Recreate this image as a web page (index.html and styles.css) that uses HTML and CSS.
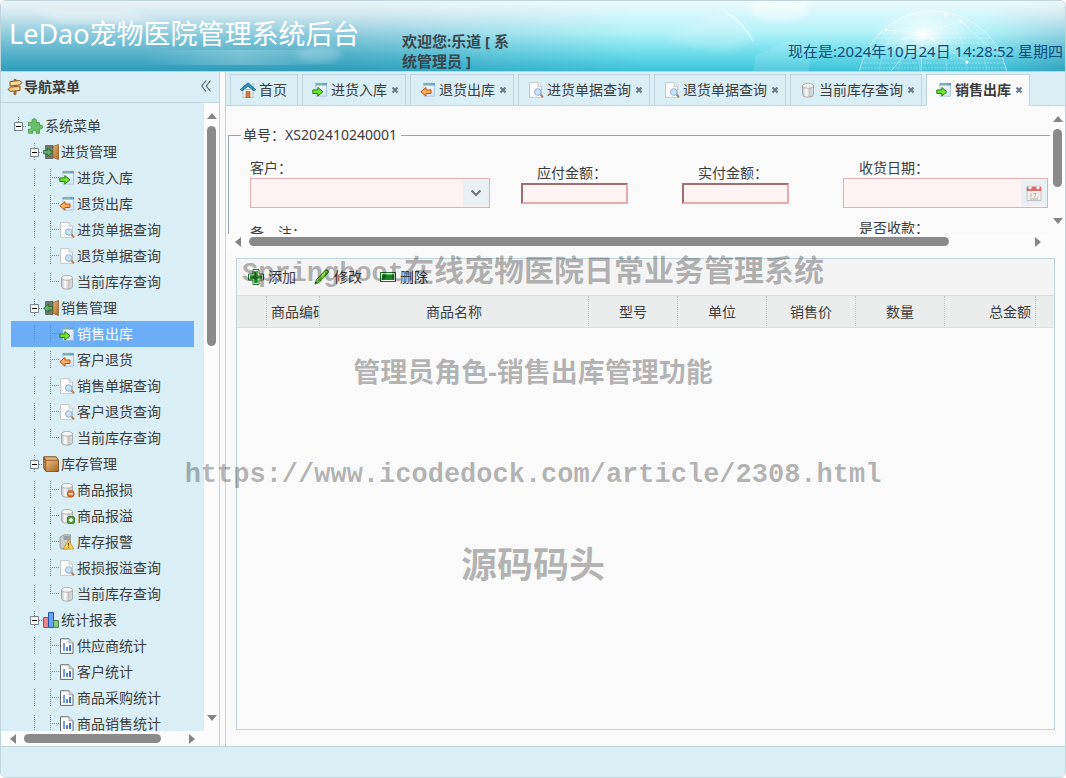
FILE: index.html
```html
<!DOCTYPE html>
<html lang="zh-CN">
<head>
<meta charset="utf-8">
<title>LeDao宠物医院管理系统后台</title>
<link rel="stylesheet" href="styles.css">
</head>
<body>
<svg class="sprite" aria-hidden="true">
  <defs>
    <linearGradient id="cyl" x1="0" x2="1" y1="0" y2="0"><stop offset="0" stop-color="#bdbdbd"/><stop offset=".35" stop-color="#fff"/><stop offset=".65" stop-color="#c4c4c4"/><stop offset="1" stop-color="#e2e2e2"/></linearGradient>
    <linearGradient id="win" x1="0" x2="1" y1="0" y2="1"><stop offset="0" stop-color="#fff"/><stop offset="1" stop-color="#cfe3f8"/></linearGradient>
    <linearGradient id="bar" x1="0" x2="1" y1="0" y2="0"><stop offset="0" stop-color="#7ea6dc"/><stop offset="1" stop-color="#3566ad"/></linearGradient>
    <linearGradient id="wood" x1="0" x2="1" y1="0" y2="1"><stop offset="0" stop-color="#e8b878"/><stop offset="1" stop-color="#a8692c"/></linearGradient>
  </defs>
  <symbol id="i-sign" viewBox="0 0 16 16"><path d="M7 .5h2v15H7z" fill="#c98b45" stroke="#70451e" stroke-width=".7"/><path d="M3 2.500 12.500 1.500l2.500 2-2.500 2.500-9.500 1z" fill="#f3cf8e" stroke="#8a5a25"/><path d="M13 7 3.500 8 1 10.500l2.500 2 9.500-1z" fill="#eebb70" stroke="#8a5a25"/><path d="m4 4.700 8-1M4 10.500l8-1" stroke="#fbe6bd"/></symbol>
  <symbol id="i-home" viewBox="0 0 16 16"><path d="M3 7.500h10V15.500H3z" fill="#f4f1ec" stroke="#b7aca2" stroke-width=".8"/><path d="M6 9.500h4v6H6z" fill="#c87d49" stroke="#93562c" stroke-width=".6"/><path d="M8 .8.5 7.300 2 9l6-5 6 5 1.500-1.700z" fill="#2b8fb8" stroke="#17698e" stroke-width=".8"/><path d="M12 1.500h2v3l-2-1.500z" fill="#e8ecee" stroke="#aaa" stroke-width=".4"/></symbol>
  <symbol id="i-win" viewBox="0 0 16 16"><path d="M4 1.300h10.500v12.900H4z" fill="url(#win)" stroke="#a9c3e0" stroke-width=".9"/><path d="M3.600 1h11.400v2.500H3.600z" fill="#6ba0cd"/><path d="M4 1.300h7v1.400H4z" fill="#86bd9a"/></symbol>
  <symbol id="i-in" viewBox="0 0 16 16"><use href="#i-win"/><path d="M.8 8h5V5.500l5.200 4.300-5.200 4.300V11.500h-5z" fill="#6fe52c" stroke="#267d16"/></symbol>
  <symbol id="i-out" viewBox="0 0 16 16"><use href="#i-win"/><path d="M11 8H6V5.500L.8 9.800 6 14.100V11.500h5z" fill="#ffac5e" stroke="#b65410"/></symbol>
  <symbol id="i-find" viewBox="0 0 16 16"><path d="M1.500.6H10l3.500 3.500v11.300h-12z" fill="#fcfcfd" stroke="#bfc3c8" stroke-width=".9"/><path d="M10 .8v3.500h3.500" fill="#e4e8ec" stroke="#bfc3c8" stroke-width=".7"/><path d="m12.300 12.300 2.700 3" stroke="#ba7b4c" stroke-width="2"/><circle cx="9.800" cy="10" r="3.300" fill="#c9e0f8" stroke="#8fb2d9"/></symbol>
  <symbol id="i-db" viewBox="0 0 16 16"><path d="M2.500 4v8.500c0 3.500 11 3.500 11 0V4z" fill="url(#cyl)" stroke="#9a9a9a" stroke-width=".8"/><ellipse cx="8" cy="3.800" rx="5.500" ry="2.400" fill="#f5f5f5" stroke="#a5a5a5" stroke-width=".8"/></symbol>
  <symbol id="i-dbdel" viewBox="0 0 16 16"><use href="#i-db"/><circle cx="11.800" cy="11.800" r="3.400" fill="#e5742d" stroke="#b14a12" stroke-width=".8"/><path d="M9.800 11.800h4" stroke="#fff" stroke-width="1.500"/></symbol>
  <symbol id="i-dbadd" viewBox="0 0 16 16"><use href="#i-db"/><rect x="8.500" y="8.500" width="7" height="7" rx="1.500" fill="#5da046" stroke="#2e6d25" stroke-width=".8"/><path d="M10 12h4M12 10v4" stroke="#fff" stroke-width="1.400"/></symbol>
  <symbol id="i-warn" viewBox="0 0 16 16"><path d="M1 3 5 .8h6.500v11L8 15H2L1 13z" fill="#c9cbcd" stroke="#8e9296" stroke-width=".8"/><path d="M4.500 3H11M4.500 5H11" stroke="#73777a"/><path d="M9.500 6 14.800 15H4.200z" fill="#ffd964" stroke="#c99422" stroke-linejoin="round"/><path d="M9.500 8.800v3M9.500 12.800v1.100" stroke="#6c4d08" stroke-width="1.200"/></symbol>
  <symbol id="i-puzzle" viewBox="0 0 16 16"><path d="M1.500 4.500h4C4 2 5.500.8 7.200.8S10.300 2 9 4.500h3.500v3c2-1.200 3 .2 3 1.500s-1 2.700-3 1.500v4.700H9c1-2-.2-2.800-1.500-2.800s-2.500.8-1.500 2.800H1.500V11c2 1 3-.5 3-1.700S3.500 7 1.500 8z" fill="#6abf6a" stroke="#4c9c4f" stroke-width=".9"/></symbol>
  <symbol id="i-doorin" viewBox="0 0 16 16"><path d="M2.500 1.500H10v13H2.500z" fill="#6d7874" stroke="#4c5552" stroke-width=".7"/><path d="m10 2.500 5.500-2v15l-5.500-2z" fill="url(#wood)" stroke="#94612a" stroke-width=".8"/><path d="M.5 6.500h4V4l5 4.200-5 4.200V9.900h-4z" fill="#61ad62" stroke="#28652c" stroke-width=".8"/></symbol>
  <symbol id="i-doorout" viewBox="0 0 16 16"><path d="M2.500 1.500H10v13H2.500z" fill="#6d7874" stroke="#4c5552" stroke-width=".7"/><path d="m10 2.500 5.500-2v15l-5.500-2z" fill="url(#wood)" stroke="#94612a" stroke-width=".8"/><path d="M9.500 6.500h-4V4l-5 4.200 5 4.200V9.900h4z" fill="#61ad62" stroke="#28652c" stroke-width=".8"/></symbol>
  <symbol id="i-box" viewBox="0 0 16 16"><path d="M.7.800h12.500l2.300 3.500V15.500H3L.7 12z" fill="#8c5424" stroke="#67401c" stroke-width=".8"/><path d="M3.200 4.700h12v10.500h-12z" fill="url(#wood)"/><path d="M1 1h11.800l2.500 3.200H3.300z" fill="#e1b579" stroke="#9b6730" stroke-width=".7"/><path d="M1.800 4v8.500" stroke="#c8904e"/></symbol>
  <symbol id="i-chart" viewBox="0 0 16 16"><path d="M.6 5.500h4.800v9.900H.6z" fill="#f58a8a" stroke="#c93740"/><path d="M5.500.600h5v14.800h-5z" fill="#6ba3f5" stroke="#2255a8"/><path d="M10.600 8.500h4.800v6.900h-4.800z" fill="#8fce82" stroke="#43813e"/></symbol>
  <symbol id="i-report" viewBox="0 0 16 16"><path d="M1.500.8H10l4 4v10.600H1.500z" fill="#fff" stroke="#61686e"/><path d="M10 .8v4h4" fill="#d7dce0" stroke="#8e959a" stroke-width=".8"/><path d="M4 5h2v8H4zM7 9h2v4H7zM10 7h2v6h-2z" fill="url(#bar)"/></symbol>
  <symbol id="i-minus" viewBox="0 0 9 9"><path d="M.5.5h8v8h-8z" fill="#fff" stroke="#7b8488"/><path d="M2 4.500h5" stroke="#000"/></symbol>
  <symbol id="i-x" viewBox="0 0 8 8"><path d="m1.500 1.500 5 5m0-5-5 5" stroke="#67768a" stroke-width="2"/></symbol>
  <symbol id="i-add" viewBox="0 0 16 16"><path d="M5 .5h6V5h4.500v6H11v4.500H5V11H.5V5H5z" fill="#fff" stroke="#20702b"/><path d="M6.200 2h3.600v4.200H14v3.600H9.800V14H6.200V9.800H2V6.200h4.200z" fill="#16891d"/><path d="M7 2.500h1.500V7H13" fill="none" stroke="#67be62" stroke-width=".7"/></symbol>
  <symbol id="i-edit" viewBox="0 0 16 16"><path d="m1 15 1.500-4.500 9-9.500c1.500-.8 3.500.8 2.800 2.500l-9 9.800z" fill="#6dcc2c" stroke="#267d18"/><path d="m3.500 11 9-9" stroke="#c7f492"/><path d="m1 15 .8-2.400 1.600 1.400z" fill="#2c4121"/></symbol>
  <symbol id="i-del" viewBox="0 0 16 16"><rect x=".5" y="3.500" width="15" height="9" fill="#fff" stroke="#20702b"/><path d="M2 5h12v6H2z" fill="#16891d"/><path d="M2.500 5.500h11" stroke="#67be62"/></symbol>
  <symbol id="i-cal" viewBox="0 0 16 16"><path d="M1 3h14v12.500H1z" fill="#f2f0ef" stroke="#bab4b1" stroke-width=".8"/><path d="M.8 1.500h14.400V6H.8z" fill="#df6a68"/><circle cx="4" cy="2.500" r="1.700" fill="#fff" stroke="#bbb" stroke-width=".6"/><circle cx="12" cy="2.500" r="1.700" fill="#fff" stroke="#bbb" stroke-width=".6"/><path d="M5 8v4.500M7.500 8.300h2.500l-1.500 4.200M11 12h1.500M4 14h8" stroke="#b2aca9" fill="none" stroke-width=".9"/></symbol>
  <symbol id="a-up" viewBox="0 0 10 6"><path d="m0 6 5-6 5 6z" fill="#858585"/></symbol>
  <symbol id="a-down" viewBox="0 0 10 6"><path d="m0 0 5 6 5-6z" fill="#858585"/></symbol>
  <symbol id="a-left" viewBox="0 0 6 10"><path d="m6 0-6 5 6 5z" fill="#858585"/></symbol>
  <symbol id="a-right" viewBox="0 0 6 10"><path d="m0 0 6 5-6 5z" fill="#858585"/></symbol>
</svg>

<div class="app">
  <header class="banner">
    <svg class="banner-art" viewBox="0 0 1064 70" preserveAspectRatio="none" aria-hidden="true">
      <defs>
        <linearGradient id="sky" x1="0" x2="0" y1="0" y2="1"><stop offset="0" stop-color="#edf5f8"/><stop offset=".2" stop-color="#cfe6ee"/><stop offset=".5" stop-color="#87c8da"/><stop offset=".78" stop-color="#50afc8"/><stop offset="1" stop-color="#2f9cba"/></linearGradient>
        <linearGradient id="aqua" x1="0" x2="0" y1="0" y2="1"><stop offset="0" stop-color="#eefafc"/><stop offset=".45" stop-color="#b2f2f9"/><stop offset=".75" stop-color="#6cdcea"/><stop offset="1" stop-color="#3cc2da"/></linearGradient>
        <linearGradient id="fade" x1="0" x2="1" y1="0" y2="0"><stop offset=".32" stop-color="#000"/><stop offset=".6" stop-color="#fff"/><stop offset=".92" stop-color="#fff"/><stop offset="1" stop-color="#333"/></linearGradient>
        <mask id="m"><path d="M0 0h1064v70H0z" fill="url(#fade)"/></mask>
        <radialGradient id="glow"><stop offset="0" stop-color="#fff"/><stop offset=".35" stop-color="#fff" stop-opacity=".5"/><stop offset="1" stop-color="#fff" stop-opacity="0"/></radialGradient>
        <linearGradient id="mist" x1="0" x2="1" y1="0" y2="0"><stop offset="0" stop-color="#fff" stop-opacity="0"/><stop offset=".5" stop-color="#fff" stop-opacity=".22"/><stop offset="1" stop-color="#fff" stop-opacity="0"/></linearGradient>
        <filter id="soft"><feGaussianBlur stdDeviation="3"/></filter>
      </defs>
      <path d="M0 0h1064v70H0z" fill="url(#sky)"/>
      <path d="M0 0h1064v70H0z" fill="url(#aqua)" mask="url(#m)"/>
      <path d="M30 8h95l35 14H60z" fill="#fff" opacity=".3" filter="url(#soft)"/>
      <path d="M140 49h200v15H140z" fill="url(#mist)"/>
      <ellipse cx="318" cy="53" rx="22" ry="8" fill="#fff" opacity=".2" filter="url(#soft)"/>
      <path d="m665 36 55-26q22 5 31 30l-22 10q-42-1-64-14z" fill="#fff" opacity=".15" filter="url(#soft)"/>
      <path d="M724 11q16 8 28 29" fill="none" stroke="#fff" stroke-width="2" opacity=".4"/>
      <path d="m755 55 32-15 24 8-4 22h-54z" fill="#fff" opacity=".13" stroke="#fff"/>
      <ellipse cx="778" cy="7" rx="30" ry="13" fill="#fff" opacity=".45" filter="url(#soft)"/>
      <g fill="none" stroke="#fff">
        <circle cx="932" cy="85" r="75" fill="#fff" fill-opacity=".1" opacity=".5"/>
        <g opacity=".3" stroke-dasharray="2 1"><ellipse cx="932" cy="85" rx="55" ry="75"/><ellipse cx="932" cy="85" rx="35" ry="75"/><ellipse cx="932" cy="85" rx="14" ry="75"/><path d="M892 22h80M879 32h106M870 42h124M864 52h136M860 62h144M874 37h116M866 47h132M862 57h140M858 67h148"/></g>
        <path d="m865 50 57-18 38-12 30 28M885 29l37 3 44 29M922 32l-32 38M922 32l-2 38" opacity=".4"/>
      </g>
      <ellipse cx="923" cy="33" rx="50" ry="28" fill="url(#glow)"/>
      <g fill="#fff"><circle cx="885" cy="29" r="1.500"/><circle cx="960" cy="20" r="1.500"/><circle cx="966" cy="61" r="1.500"/><circle cx="990" cy="48" r="1.500"/><circle cx="945" cy="14" r="1.500"/><circle cx="900" cy="46" r="1.500"/></g>
    </svg>
    <h1 class="brand">LeDao宠物医院管理系统后台</h1>
    <p class="welcome">欢迎您:乐道 [ 系统管理员 ]</p>
    <time class="clock" datetime="2024-10-24T14:28:52">现在是:2024年10月24日 14:28:52 星期四</time>
  </header>

  <div class="middle">
    <aside class="side">
      <div class="side-head">
        <svg class="icon"><use href="#i-sign"/></svg>
        <h2>导航菜单</h2>
        <button class="collapse" type="button" aria-label="收起"><svg width="10" height="12" viewBox="0 0 10 12"><path d="M5 .5.800 6 5 11.500M9.500.5 5.300 6l4.200 5.500" fill="none" stroke="#5c6670" stroke-width="1.200"/></svg></button>
      </div>
      <div class="side-body">
        <nav class="tree" aria-label="导航菜单">
          <a class="node top" href="#"><i class="hit"><svg><use href="#i-minus"/></svg></i><svg class="icon"><use href="#i-puzzle"/></svg><span>系统菜单</span></a>
          <a class="node" href="#"><i></i><i class="hit"><svg><use href="#i-minus"/></svg></i><svg class="icon"><use href="#i-doorin"/></svg><span>进货管理</span></a>
          <a class="node" href="#"><i></i><i class="line"></i><i class="join"></i><svg class="icon"><use href="#i-in"/></svg><span>进货入库</span></a>
          <a class="node" href="#"><i></i><i class="line"></i><i class="join"></i><svg class="icon"><use href="#i-out"/></svg><span>退货出库</span></a>
          <a class="node" href="#"><i></i><i class="line"></i><i class="join"></i><svg class="icon"><use href="#i-find"/></svg><span>进货单据查询</span></a>
          <a class="node" href="#"><i></i><i class="line"></i><i class="join"></i><svg class="icon"><use href="#i-find"/></svg><span>退货单据查询</span></a>
          <a class="node" href="#"><i></i><i class="line"></i><i class="join last"></i><svg class="icon"><use href="#i-db"/></svg><span>当前库存查询</span></a>
          <a class="node" href="#"><i></i><i class="hit"><svg><use href="#i-minus"/></svg></i><svg class="icon"><use href="#i-doorout"/></svg><span>销售管理</span></a>
          <a class="node selected" href="#"><i></i><i class="line"></i><i class="join"></i><svg class="icon"><use href="#i-in"/></svg><span>销售出库</span></a>
          <a class="node" href="#"><i></i><i class="line"></i><i class="join"></i><svg class="icon"><use href="#i-out"/></svg><span>客户退货</span></a>
          <a class="node" href="#"><i></i><i class="line"></i><i class="join"></i><svg class="icon"><use href="#i-find"/></svg><span>销售单据查询</span></a>
          <a class="node" href="#"><i></i><i class="line"></i><i class="join"></i><svg class="icon"><use href="#i-find"/></svg><span>客户退货查询</span></a>
          <a class="node" href="#"><i></i><i class="line"></i><i class="join last"></i><svg class="icon"><use href="#i-db"/></svg><span>当前库存查询</span></a>
          <a class="node" href="#"><i></i><i class="hit"><svg><use href="#i-minus"/></svg></i><svg class="icon"><use href="#i-box"/></svg><span>库存管理</span></a>
          <a class="node" href="#"><i></i><i class="line"></i><i class="join"></i><svg class="icon"><use href="#i-dbdel"/></svg><span>商品报损</span></a>
          <a class="node" href="#"><i></i><i class="line"></i><i class="join"></i><svg class="icon"><use href="#i-dbadd"/></svg><span>商品报溢</span></a>
          <a class="node" href="#"><i></i><i class="line"></i><i class="join"></i><svg class="icon"><use href="#i-warn"/></svg><span>库存报警</span></a>
          <a class="node" href="#"><i></i><i class="line"></i><i class="join"></i><svg class="icon"><use href="#i-find"/></svg><span>报损报溢查询</span></a>
          <a class="node" href="#"><i></i><i class="line"></i><i class="join last"></i><svg class="icon"><use href="#i-db"/></svg><span>当前库存查询</span></a>
          <a class="node" href="#"><i></i><i class="hit"><svg><use href="#i-minus"/></svg></i><svg class="icon"><use href="#i-chart"/></svg><span>统计报表</span></a>
          <a class="node" href="#"><i></i><i class="line"></i><i class="join"></i><svg class="icon"><use href="#i-report"/></svg><span>供应商统计</span></a>
          <a class="node" href="#"><i></i><i class="line"></i><i class="join"></i><svg class="icon"><use href="#i-report"/></svg><span>客户统计</span></a>
          <a class="node" href="#"><i></i><i class="line"></i><i class="join"></i><svg class="icon"><use href="#i-report"/></svg><span>商品采购统计</span></a>
          <a class="node" href="#"><i></i><i class="line"></i><i class="join"></i><svg class="icon"><use href="#i-report"/></svg><span>商品销售统计</span></a>
        </nav>
        <div class="vbar" aria-hidden="true"><svg><use href="#a-up"/></svg><div class="track"><div class="thumb thumb-tree-v"></div></div><svg><use href="#a-down"/></svg></div>
        <div class="hbar" aria-hidden="true"><svg><use href="#a-left"/></svg><div class="track"><div class="thumb thumb-tree-h"></div></div><svg><use href="#a-right"/></svg></div>
      </div>
    </aside>

    <main class="center">
      <div class="tabs">
        <button class="tab home" type="button"><svg class="icon"><use href="#i-home"/></svg><span>首页</span></button>
        <button class="tab" type="button"><svg class="icon"><use href="#i-in"/></svg><span>进货入库</span><svg class="close"><use href="#i-x"/></svg></button>
        <button class="tab" type="button"><svg class="icon"><use href="#i-out"/></svg><span>退货出库</span><svg class="close"><use href="#i-x"/></svg></button>
        <button class="tab" type="button"><svg class="icon"><use href="#i-find"/></svg><span>进货单据查询</span><svg class="close"><use href="#i-x"/></svg></button>
        <button class="tab" type="button"><svg class="icon"><use href="#i-find"/></svg><span>退货单据查询</span><svg class="close"><use href="#i-x"/></svg></button>
        <button class="tab" type="button"><svg class="icon"><use href="#i-db"/></svg><span>当前库存查询</span><svg class="close"><use href="#i-x"/></svg></button>
        <button class="tab active" type="button"><svg class="icon"><use href="#i-in"/></svg><span>销售出库</span><svg class="close"><use href="#i-x"/></svg></button>
      </div>

      <section class="form-pane">
        <form class="form-view">
          <fieldset class="order">
            <legend>单号：XS202410240001</legend>
            <div class="fields">
              <div class="field">
                <label for="customer">客户：</label>
                <div class="combo"><input id="customer" type="text"><button type="button" aria-label="展开"><svg width="12" height="8" viewBox="0 0 12 8"><path d="m1.500 1.500 4.500 4.500 4.500-4.500" fill="none" stroke="#737373" stroke-width="2"/></svg></button></div>
              </div>
              <div class="field inset"><label for="due">应付金额：</label><input class="amount" id="due" type="text"></div>
              <div class="field inset"><label for="paid">实付金额：</label><input class="amount" id="paid" type="text"></div>
              <div class="field inset">
                <label for="date">收货日期：</label>
                <div class="combo"><input id="date" type="text"><button type="button" aria-label="选择日期"><svg class="icon"><use href="#i-cal"/></svg></button></div>
              </div>
              <div class="field remark"><label for="note">备　注：</label><input class="amount" id="note" type="text"></div>
              <div class="field inset received"><label for="state">是否收款：</label><div class="combo"><input id="state" type="text"></div></div>
            </div>
          </fieldset>
        </form>
        <div class="vbar" aria-hidden="true"><svg><use href="#a-up"/></svg><div class="track"><div class="thumb thumb-form-v"></div></div><svg><use href="#a-down"/></svg></div>
        <div class="hbar" aria-hidden="true"><svg><use href="#a-left"/></svg><div class="track"><div class="thumb thumb-form-h"></div></div><svg><use href="#a-right"/></svg></div>
      </section>

      <section class="grid">
        <div class="toolbar">
          <button type="button"><svg class="icon"><use href="#i-add"/></svg>添加</button>
          <button type="button"><svg class="icon"><use href="#i-edit"/></svg>修改</button>
          <button type="button"><svg class="icon"><use href="#i-del"/></svg>删除</button>
        </div>
        <table>
          <colgroup><col class="c-no"><col class="c-code"><col class="c-name"><col class="c-std"><col class="c-std"><col class="c-std"><col class="c-std"><col class="c-sum"><col></colgroup>
          <thead><tr><th></th><th class="code">商品编码</th><th>商品名称</th><th>型号</th><th>单位</th><th>销售价</th><th>数量</th><th class="sum">总金额</th><th></th></tr></thead>
        </table>
      </section>
    </main>
  </div>

  <footer class="foot"></footer>

  <div class="watermark">
    <p><span class="latin">Springboot</span>在线宠物医院日常业务管理系统</p>
    <p class="mid">管理员角色-销售出库管理功能</p>
    <p class="latin">https://www.icodedock.com/article/2308.html</p>
    <p class="big">源码码头</p>
  </div>
</div>
</body>
</html>
```
FILE: styles.css
```css
* { box-sizing: border-box; }

body {
  margin: 0;
  background: #fff;
  color: #3c3c3c;
  font: 14px/20px "Noto Sans", "Noto Sans CJK SC", sans-serif;
}

h1, h2, p { margin: 0; }
button, input { font: inherit; color: inherit; border-radius: 0; }
button { margin: 0; padding: 0; border: 0; background: none; cursor: pointer; }

.sprite { position: absolute; width: 0; height: 0; }
.icon { flex: none; display: block; width: 16px; height: 16px; }

.app {
  position: relative;
  display: flex;
  flex-direction: column;
  height: 100vh;
  overflow: hidden;
  border: 1px solid #c0d5db;
  border-radius: 6px;
  background: #fafafa;
}

/* Banner */
.banner {
  position: relative;
  flex: none;
  display: grid;
  grid-template-columns: 393px 120px 1fr;
  height: 70px;
  padding: 0 2px 0 8px;
}
.banner-art { position: absolute; inset: 0; width: 100%; height: 100%; }
.brand {
  position: relative;
  padding-top: 13px;
  color: #fff;
  font-size: 27px;
  font-weight: 400;
  line-height: 40px;
  white-space: nowrap;
}
.welcome {
  position: relative;
  padding-top: 30px;
  color: #3b464c;
  font-size: 15px;
  font-weight: 700;
}
.clock {
  position: relative;
  padding-top: 40px;
  color: #0e4c7c;
  font-size: 15px;
  text-align: right;
  white-space: nowrap;
}

.middle {
  flex: 1;
  display: flex;
  gap: 5px;
  min-height: 0;
  background: #fafafa;
  border-top: 1px solid #c0d5db;
}

/* Navigation */
.side {
  flex: none;
  display: flex;
  flex-direction: column;
  width: 219px;
  border-right: 1px solid #c0d5db;
}
.side-head {
  display: flex;
  align-items: center;
  gap: 1px;
  height: 31px;
  padding: 0 8px 0 6px;
  background: #daeef5;
  border-bottom: 1px solid #c0d5db;
}
.side-head h2 { flex: 1; font-size: 14px; font-weight: 700; }
.side-body {
  flex: 1;
  display: grid;
  grid-template: minmax(0, 1fr) 15px / 1fr 15px;
  min-height: 0;
}
.tree {
  overflow: hidden;
  padding: 10px;
  background: #daeef5;
}
.node {
  display: flex;
  align-items: center;
  height: 26px;
  color: #3c3c3c;
  text-decoration: none;
  white-space: nowrap;
}
.node span { padding-left: 2px; }
.node.selected { background: #6cadf7; color: #fff; }
.node i { flex: none; width: 16px; height: 18px; }
.hit {
  display: flex;
  align-items: center;
  padding-left: 3px;
  background:
    repeating-linear-gradient(90deg, #7d8b91 0 1px, transparent 1px 2px) 12px 9px / 4px 1px no-repeat,
    repeating-linear-gradient(#7d8b91 0 1px, transparent 1px 2px) 7px 0 / 1px 18px no-repeat;
}
.top .hit {
  background:
    repeating-linear-gradient(90deg, #7d8b91 0 1px, transparent 1px 2px) 12px 9px / 4px 1px no-repeat,
    repeating-linear-gradient(#7d8b91 0 1px, transparent 1px 2px) 7px 0 / 1px 5px no-repeat;
}
.hit svg { width: 9px; height: 9px; }
.line { background: repeating-linear-gradient(#7d8b91 0 1px, transparent 1px 2px) 7px 0 / 1px 18px no-repeat; }
.join {
  background:
    repeating-linear-gradient(90deg, #7d8b91 0 1px, transparent 1px 2px) 9px 8px / 7px 1px no-repeat,
    repeating-linear-gradient(#7d8b91 0 1px, transparent 1px 2px) 7px 0 / 1px 18px no-repeat;
}
.join.last {
  background:
    repeating-linear-gradient(90deg, #7d8b91 0 1px, transparent 1px 2px) 9px 8px / 7px 1px no-repeat,
    repeating-linear-gradient(#7d8b91 0 1px, transparent 1px 2px) 7px 0 / 1px 9px no-repeat;
}

/* Scrollbars */
.vbar, .hbar { display: flex; align-items: center; background: #fcfcfc; }
.vbar { flex-direction: column; padding: 10px 0; gap: 7px; }
.hbar { grid-column: 1 / -1; padding: 0 24px 0 9px; gap: 8px; }
.vbar svg { flex: none; width: 10px; height: 6px; }
.hbar svg { flex: none; width: 6px; height: 10px; }
.track { flex: 1; }
.thumb { border-radius: 5px; background: #8a8a8a; }
.vbar .thumb { width: 9px; }
.hbar .thumb { height: 9px; }
.thumb-tree-v { height: 220px; }
.thumb-tree-h { width: 137px; }
.thumb-form-v { height: 58px; }
.thumb-form-h { width: 90%; }

/* Workspace */
.center {
  flex: 1;
  display: flex;
  flex-direction: column;
  min-width: 0;
  border-left: 1px solid #c0d5db;
}
.tabs {
  flex: none;
  display: flex;
  gap: 4px;
  height: 34px;
  padding: 2px 4px 0;
  background: #daeef5;
  box-shadow: inset 0 -1px #c0d5db;
}
.tab {
  display: flex;
  align-items: center;
  gap: 3px;
  padding: 0 6px 0 9px;
  border: 1px solid #c0d5db;
  background: #daeef5;
  white-space: nowrap;
}
.tab.home { padding-right: 10px; }
.tab.active { background: #fafafa; border-bottom-color: #fafafa; font-weight: 700; }
.close { width: 8px; height: 8px; margin-left: 1px; }

.form-pane {
  flex: none;
  display: grid;
  grid-template: minmax(0, 1fr) 15px / minmax(0, 1fr) 15px;
  height: 143px;
}
.form-view { overflow: hidden; padding: 19px 0 0 2px; }
.order {
  min-width: 930px;
  height: 260px;
  margin: 0;
  padding: 13px 12px 0;
  border: 1px solid #96a3b0;
}
.order legend { padding: 0 4px 0 2px; }
.fields {
  display: grid;
  grid-template-columns: 271px 161px 161px 205px;
  grid-auto-rows: 50px;
  row-gap: 10px;
  align-items: center;
  padding-left: 9px;
}
.field { display: flex; flex-direction: column; align-items: flex-start; }
.field.inset label { padding-left: 16px; }
.combo {
  display: flex;
  width: 240px;
  height: 30px;
  padding: 1px 0;
  border: 1px solid #e5aeae;
  background: #fff3f3;
}
.inset .combo { width: 205px; }
.combo input {
  flex: 1;
  min-width: 0;
  padding: 0 4px;
  border: 0;
  background: transparent;
}
.combo button {
  display: flex;
  align-items: center;
  justify-content: center;
  width: 26px;
  background: #e9f0f4;
}
.amount {
  width: 107px;
  height: 21px;
  padding: 0 4px;
  border: 2px solid;
  border-color: #9f6f6f #e8abab #e8abab #9f6f6f;
  background: #fff3f3;
}
.remark { grid-column: 1; }
.received { grid-column: 4; }

/* Data grid */
.grid {
  flex: 1;
  min-height: 0;
  margin: 9px 10px 16px;
  border: 1px solid #c0d5db;
}
.toolbar {
  display: flex;
  align-items: center;
  gap: 18px;
  height: 37px;
  padding: 0 11px;
  background: #f4f4f4;
  border-bottom: 1px solid #d9dfe2;
}
.toolbar button { display: flex; align-items: center; gap: 4px; }
table { width: 100%; table-layout: fixed; border-collapse: separate; border-spacing: 0; background: #ebecec; }
th {
  height: 32px;
  padding: 0 4px;
  overflow: hidden;
  border-right: 1px dotted #c0c4c6;
  border-bottom: 1px solid #d9dfe2;
  font-weight: 400;
  white-space: nowrap;
}
th:last-child { border-right: 0; }
th.code { padding: 0 0 0 4px; text-align: left; }
th.sum { text-align: right; }
.c-no { width: 30px; }
.c-code { width: 53px; }
.c-name { width: 269px; }
.c-std { width: 89px; }
.c-sum { width: 91px; }

.foot { flex: none; height: 31px; background: #daeef5; border-top: 1px solid #c0d5db; }

/* Overlay text */
.watermark {
  position: absolute;
  inset: 0;
  display: grid;
  grid-template-rows: 102px 98px 108px 72px;
  align-items: center;
  padding-top: 220px;
  color: rgba(0, 0, 0, .3);
  font-size: 30px;
  font-weight: 700;
  line-height: 40px;
  text-align: center;
  white-space: nowrap;
  pointer-events: none;
}
.watermark .mid { font-size: 27px; }
.watermark .big { font-size: 36px; }
.watermark .latin { font-family: "Liberation Mono", monospace; font-size: 27px; }
```
